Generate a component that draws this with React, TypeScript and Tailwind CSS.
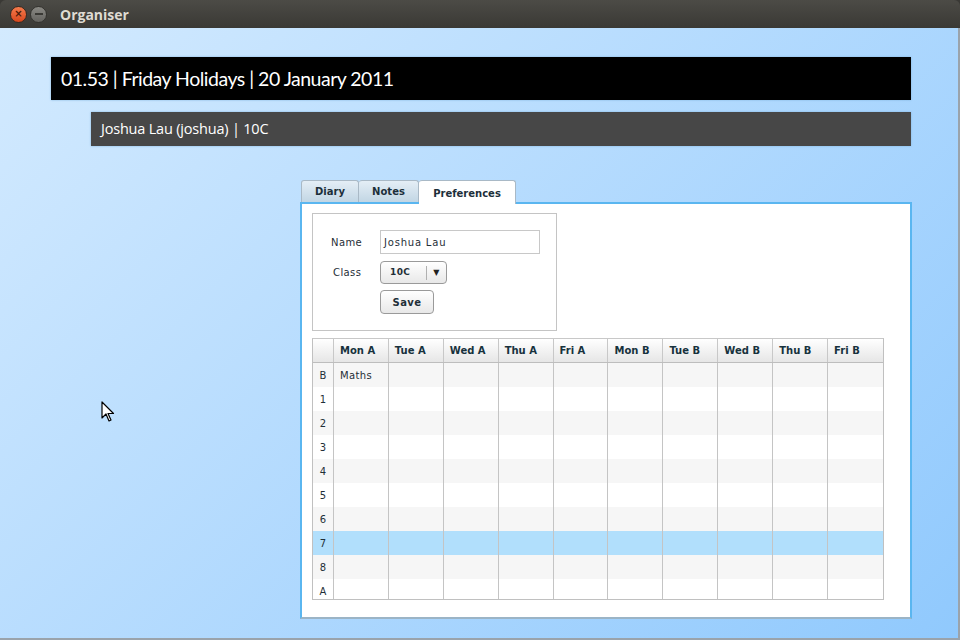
const days = ["Mon A", "Tue A", "Wed A", "Thu A", "Fri A", "Mon B", "Tue B", "Wed B", "Thu B", "Fri B"];
const periods = ["B", "1", "2", "3", "4", "5", "6", "7", "8", "A"];

function TitleBar() {
  return (
    <div className="h-[28px] flex items-center bg-linear-to-b from-[#4c4b46] to-[#3a3935] rounded-t-[6px] pl-[10px]">
      <div className="w-[17px] h-[17px] rounded-full bg-linear-to-b from-[#f57b4c] to-[#d7461c] border border-[#3a2a20] flex items-center justify-center text-[10px] leading-none text-[#4a1a08] font-bold">
        ×
      </div>
      <div className="ml-[3px] w-[17px] h-[17px] rounded-full bg-linear-to-b from-[#8a8984] to-[#64635f] border border-[#34332f] flex items-center justify-center">
        <div className="w-[8px] h-[2px] bg-[#3a3935]" />
      </div>
      <span className="ml-[13px] text-[14px] font-bold text-[#dfdbd2] font-['Open_Sans',sans-serif]">Organiser</span>
    </div>
  );
}

function Cursor() {
  return (
    <svg className="absolute left-[101px] top-[373px]" width="14" height="22" viewBox="0 0 14 22">
      <path d="M1 1 L1 17 L5 13 L8 20 L10 19 L7 12.5 L12.5 12.5 Z" fill="#fff" stroke="#000" strokeWidth="1.2" strokeLinejoin="round" />
    </svg>
  );
}

export default function App() {
  return (
    <div className="w-[960px] h-[640px] flex flex-col bg-[#3a3935] font-['DejaVu_Sans',sans-serif]">
      <TitleBar />
      <div className="relative flex-1 flex flex-col bg-linear-135 from-[#d3eafe] to-[#90c9fd] border-r-2 border-b-2 border-[#9aa3ab]">
        <div className="ml-[51px] mt-[29px] w-[860px] h-[43px] bg-black shadow-[0_0_2px_#7fb4e0] flex items-center pl-[10px]">
          <span className="text-white text-[19.5px] tracking-[-0.5px] font-['Lato',sans-serif]">01.53 | Friday Holidays | 20 January 2011</span>
        </div>
        <div className="ml-[91px] mt-[12px] w-[820px] h-[34px] bg-[#474747] shadow-[0_0_2px_#7fb4e0] flex items-center pl-[10px]">
          <span className="text-white text-[14.5px] font-['Open_Sans',sans-serif] tracking-[-0.2px]">Joshua Lau (joshua) | 10C</span>
        </div>

        <div className="ml-[300px] mt-[34px] w-[612px] flex flex-col">
          <div className="flex h-[22px] pl-[1px]">
            <div className="w-[58px] flex items-center justify-center rounded-t-[3px] border border-b-0 border-[#a9b9c6] bg-linear-to-b from-[#e4eef6] to-[#c2d6e4] text-[10px] font-bold text-[#1c2f3a]">Diary</div>
            <div className="w-[60px] flex items-center justify-center rounded-t-[3px] border border-b-0 border-l-0 border-[#a9b9c6] bg-linear-to-b from-[#e4eef6] to-[#c2d6e4] text-[10px] font-bold text-[#1c2f3a]">Notes</div>
            <div className="w-[97px] flex items-center justify-center rounded-t-[3px] border border-b-0 border-l-0 border-[#a9b9c6] bg-white text-[10px] font-bold text-[#1c2f3a] pt-[2px] -mb-[2px] relative z-10">Preferences</div>
          </div>
          <div className="h-[417px] bg-white border-2 border-[#5ab6f0] border-b-[#9bb4c6] pl-[10px] pt-[9px]">
            <div className="w-[245px] h-[118px] border border-[#c4c4c4] flex flex-col text-[10px] text-[#1f2f38] tracking-[0.4px]">
              <div className="flex items-center mt-[16px]">
                <span className="w-[67px] pl-[18px]">Name</span>
                <div className="w-[160px] h-[24px] border border-[#c8c8c8] flex items-center px-[3px] text-[10px] tracking-[0.8px]">Joshua Lau</div>
              </div>
              <div className="flex items-center mt-[7px]">
                <span className="w-[67px] pl-[20px]">Class</span>
                <div className="w-[67px] h-[23px] rounded-[4px] border border-[#9a9a9a] bg-linear-to-b from-white to-[#e8e8e8] flex items-center">
                  <span className="w-[45px] pl-[9px] font-bold text-[9px]">10C</span>
                  <div className="w-px h-[14px] bg-[#b0b0b0]" />
                  <span className="flex-1 text-center text-[8px] text-[#222]">▼</span>
                </div>
              </div>
              <div className="flex mt-[6px] ml-[67px]">
                <div className="w-[54px] h-[24px] rounded-[4px] border border-[#9a9a9a] bg-linear-to-b from-white to-[#e8e8e8] flex items-center justify-center font-bold text-[10px]">Save</div>
              </div>
            </div>

            <div className="mt-[7px] w-[572px] border border-[#c0c0c0] border-t-[#c8c8c8] text-[10px] text-[#1f2f38] overflow-hidden h-[262px]">
              <div className="flex h-[24px] bg-linear-to-b from-white to-[#e6e6e6] border-b border-[#bdbdbd]">
                <div className="w-[21px] border-r border-[#c8c8c8]" />
                {days.map((d) => (
                  <div key={d} className="w-[55px] border-r border-[#c8c8c8] last:border-r-0 flex items-center pl-[6px] font-bold text-[#17323d]">
                    {d}
                  </div>
                ))}
              </div>
              {periods.map((p, i) => (
                <div
                  key={p}
                  className={
                    "flex h-[24px] " +
                    (p === "7" ? "bg-[#b1dffc]" : i % 2 === 0 ? "bg-[#f6f6f6]" : "bg-white")
                  }
                >
                  <div className="w-[21px] border-r border-[#c4c4c4] flex items-center justify-center">{p}</div>
                  {days.map((d, j) => (
                    <div key={d} className="w-[55px] border-r border-[#c4c4c4] last:border-r-0 flex items-center pl-[6px] tracking-[0.4px]">
                      {i === 0 && j === 0 ? "Maths" : ""}
                    </div>
                  ))}
                </div>
              ))}
            </div>
          </div>
        </div>
        <Cursor />
      </div>
    </div>
  );
}
